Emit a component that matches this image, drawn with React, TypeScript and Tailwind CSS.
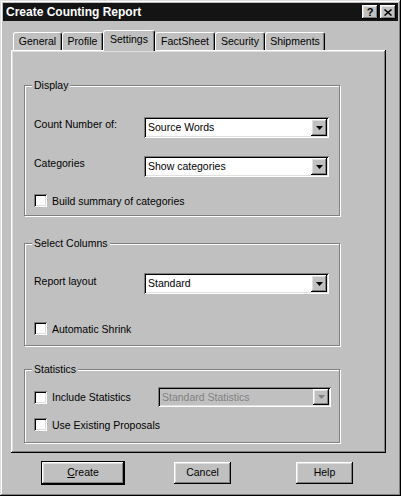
import React from "react";

const raised =
  "shadow-[inset_-1px_-1px_0_#000,inset_1px_1px_0_#fff,inset_-2px_-2px_0_#808080,inset_2px_2px_0_#dfdfdf]";
const sunken =
  "shadow-[inset_1px_1px_0_#808080,inset_-1px_-1px_0_#fff,inset_2px_2px_0_#000,inset_-2px_-2px_0_#dfdfdf]";

const tabs = [
  { label: "General", w: "w-[49px]" },
  { label: "Profile", w: "w-[41px]" },
  { label: "Settings", w: "w-[52px]", active: true },
  { label: "FactSheet", w: "w-[60px]" },
  { label: "Security", w: "w-[50px]" },
  { label: "Shipments", w: "w-[60px]" },
];

function Arrow({ disabled }: { disabled?: boolean }) {
  return (
    <svg width="7" height="4" viewBox="0 0 7 4">
      <path d="M0 0h7L3.5 4z" fill={disabled ? "#808080" : "#000"} />
    </svg>
  );
}

function Combo({
  value,
  className,
  disabled,
}: {
  value: string;
  className: string;
  disabled?: boolean;
}) {
  return (
    <div
      className={`flex p-[2px] ${sunken} ${disabled ? "bg-[#c0c0c0] text-[#808080]" : "bg-white text-black"} ${className}`}
    >
      <div className="flex-1 flex items-center pl-[2px] pt-[1px]">{value}</div>
      <div className={`w-[16px] h-full bg-[#c0c0c0] flex items-center justify-center ${raised}`}>
        <Arrow disabled={disabled} />
      </div>
    </div>
  );
}

function Check({ label }: { label: string }) {
  return (
    <div className="flex items-center">
      <div className={`w-[13px] h-[13px] bg-white ${sunken}`} />
      <span className="ml-[5px] leading-[12px]">{label}</span>
    </div>
  );
}

function Group({
  title,
  className,
  children,
}: {
  title: string;
  className: string;
  children: React.ReactNode;
}) {
  return (
    <div
      className={`relative w-[316px] border border-[#808080] shadow-[inset_1px_1px_0_#fff,1px_1px_0_#fff] flex flex-col pl-[9px] ${className}`}
    >
      <span className="absolute -top-[7px] left-[7px] px-[2px] bg-[#c0c0c0] leading-[12px]">
        {title}
      </span>
      {children}
    </div>
  );
}

function Button({
  children,
  className,
  isDefault,
}: {
  children: React.ReactNode;
  className: string;
  isDefault?: boolean;
}) {
  const inner = (
    <div className={`h-[22px] flex items-center justify-center bg-[#c0c0c0] ${raised} ${isDefault ? "" : className}`}>
      {children}
    </div>
  );
  if (isDefault) {
    return <div className={`border border-black ${className}`}>{inner}</div>;
  }
  return inner;
}

export default function App() {
  return (
    <div
      className="w-[401px] h-[496px] bg-[#c0c0c0] p-[3px] flex flex-col text-[10.5px] text-black shadow-[inset_-1px_-1px_0_#000,inset_1px_1px_0_#dfdfdf,inset_-2px_-2px_0_#808080,inset_2px_2px_0_#fff]"
      style={{ fontFamily: '"Liberation Sans", Arial, sans-serif' }}
    >
      {/* title bar */}
      <div className="h-[18px] bg-[#141414] flex items-center pl-[3px] pr-[2px]">
        <span className="text-white font-bold text-[12px] flex-1 leading-[18px]">
          Create Counting Report
        </span>
        <div className={`w-[16px] h-[14px] bg-[#c0c0c0] flex items-center justify-center font-bold text-[11px] leading-none ${raised}`}>
          ?
        </div>
        <div className={`ml-[2px] w-[16px] h-[14px] bg-[#c0c0c0] flex items-center justify-center ${raised}`}>
          <svg width="8" height="7" viewBox="0 0 8 7">
            <path d="M0.5 0.5L7.5 6.5M7.5 0.5L0.5 6.5" stroke="#000" strokeWidth="1.5" />
          </svg>
        </div>
      </div>

      {/* tabs */}
      <div className="mt-[9px] ml-[10px] h-[20px] flex items-end">
        {tabs.map((t) => (
          <div
            key={t.label}
            className={`${t.w} flex items-center justify-center bg-[#c0c0c0] border-l border-t border-r border-l-white border-t-white border-r-black rounded-tl-[3px] rounded-tr-[3px] shadow-[inset_-1px_0_0_#808080] ${
              t.active ? "h-[21px] -mb-[1px] relative z-10 pb-[2px]" : "h-[18px] pt-[1px]"
            }`}
          >
            {t.label}
          </div>
        ))}
      </div>

      {/* tab panel */}
      <div
        className={`ml-[8px] w-[375px] h-[403px] flex flex-col pl-[13px] pt-[35px] shadow-[inset_-1px_-1px_0_#000,inset_1px_1px_0_#fff,inset_-2px_-2px_0_#808080,inset_2px_2px_0_#dfdfdf]`}
      >
        <Group title="Display" className="h-[131px] pt-[31px]">
          <div className="flex items-start h-[21px]">
            <span className="w-[110px] leading-[12px] pt-[1px]">Count Number of:</span>
            <Combo value="Source Words" className="w-[185px] h-[21px]" />
          </div>
          <div className="flex items-start h-[21px] mt-[18px]">
            <span className="w-[110px] leading-[12px] pt-[1px]">Categories</span>
            <Combo value="Show categories" className="w-[185px] h-[21px]" />
          </div>
          <div className="mt-[17px]">
            <Check label="Build summary of categories" />
          </div>
        </Group>

        <Group title="Select Columns" className="h-[103px] mt-[27px] pt-[29px]">
          <div className="flex items-start h-[21px]">
            <span className="w-[110px] leading-[12px] pt-[2px]">Report layout</span>
            <Combo value="Standard" className="w-[185px] h-[21px]" />
          </div>
          <div className="mt-[28px]">
            <Check label="Automatic Shrink" />
          </div>
        </Group>

        <Group title="Statistics" className="h-[74px] mt-[23px] pt-[17px]">
          <div className="flex items-center h-[20px]">
            <div className="w-[124px]">
              <Check label="Include Statistics" />
            </div>
            <Combo value="Standard Statistics" disabled className="w-[173px] h-[20px]" />
          </div>
          <div className="mt-[11px]">
            <Check label="Use Existing Proposals" />
          </div>
        </Group>
      </div>

      {/* buttons */}
      <div className="mt-[8px] h-[24px] flex items-center">
        <div className="ml-[38px]">
          <Button isDefault className="w-[84px]">
            <span>
              <span className="underline">C</span>reate
            </span>
          </Button>
        </div>
        <div className="ml-[49px]">
          <Button className="w-[57px]">Cancel</Button>
        </div>
        <div className="ml-[65px]">
          <Button className="w-[57px]">Help</Button>
        </div>
      </div>
    </div>
  );
}
